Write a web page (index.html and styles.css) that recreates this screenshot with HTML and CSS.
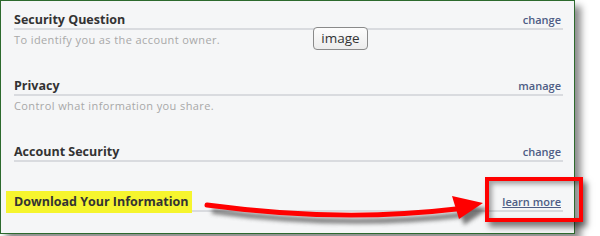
FILE: index.html
```html
<!DOCTYPE html>
<html lang="en">
<head>
    <meta charset="UTF-8">
    <title>Account Settings</title>
    <link rel="stylesheet" href="styles.css">
</head>
<body>
    <div class="page">
        <div class="frame">
            <div class="setting">
                <div class="setting-head">
                    <span class="title">Security Question</span>
                    <a class="action" href="#">change</a>
                </div>
                <div class="desc">To identify you as the account owner.</div>
            </div>
            <div class="setting">
                <div class="setting-head">
                    <span class="title">Privacy</span>
                    <a class="action" href="#">manage</a>
                </div>
                <div class="desc">Control what information you share.</div>
            </div>
            <div class="setting">
                <div class="setting-head">
                    <span class="title">Account Security</span>
                    <a class="action" href="#">change</a>
                </div>
            </div>
            <div class="setting last">
                <div class="setting-head">
                    <span class="title"><span class="highlight">Download Your Information</span></span>
                    <a class="action underline" href="#">learn more</a>
                </div>
            </div>
        </div>

        <span class="img-tag">image</span>

        <svg class="arrow" width="600" height="236" viewBox="0 0 600 236">
            <defs>
                <filter id="soft" x="-10%" y="-50%" width="120%" height="200%">
                    <feGaussianBlur stdDeviation="2.2"/>
                </filter>
            </defs>
            <g transform="translate(5,6)" fill="#555" stroke="#555" filter="url(#soft)" opacity="0.8">
                <path d="M207 205 Q340 223 456 209" fill="none" stroke-width="5"/>
                <polygon points="452,196 483,203 459,219" stroke="none"/>
            </g>
            <path d="M207 205 Q340 223 456 209" fill="none" stroke="#f00" stroke-width="5" stroke-linecap="round"/>
            <polygon points="452,196 483,203 459,219" fill="#f00"/>
        </svg>

        <div class="callout"></div>
    </div>
</body>
</html>
```

FILE: styles.css
```css
body {
    margin: 0;
    background: #fff;
    font-family: "Open Sans", "DejaVu Sans", sans-serif;
}
.page {
    position: relative;
    width: 600px;
    height: 236px;
    overflow: hidden;
}
.frame {
    width: 549px;
    height: 221px;
    padding: 11px 11px 0 13px;
    background: #f5f6f7;
    border: 1px solid #2d6a2d;
    box-shadow: 6px 6px 7px rgba(0, 0, 0, 0.45);
    overflow: hidden;
}
.setting {
    padding-bottom: 32px;
}
.setting.last {
    padding-bottom: 0;
}
.setting-head {
    display: flex;
    justify-content: space-between;
    align-items: flex-end;
    height: 16px;
    border-bottom: 2px solid #d9dbdf;
}
.title {
    font-size: 12.5px;
    font-weight: 700;
    color: #333;
    line-height: 16px;
}
.highlight {
    background: #f6f52e;
    padding: 2px 4px 3px 8px;
    margin-left: -8px;
}
.action {
    font-size: 11px;
    font-weight: 600;
    color: #4e5d85;
    text-decoration: none;
    line-height: 16px;
    margin-right: 2px;
}
.action.underline {
    text-decoration: underline;
}
.desc {
    font-size: 11px;
    letter-spacing: 0.4px;
    color: #a8a8a8;
    line-height: 14px;
    margin: 3px 0 -1px;
}
.img-tag {
    position: absolute;
    left: 313px;
    top: 27px;
    width: 53px;
    height: 21px;
    line-height: 20px;
    text-align: center;
    font-size: 13.5px;
    color: #333;
    border: 1px solid #8a8a8a;
    border-radius: 4px;
    background: linear-gradient(#fdfdfd, #ececec);
}
.arrow {
    position: absolute;
    left: 0;
    top: 0;
}
.callout {
    position: absolute;
    left: 485px;
    top: 177px;
    width: 90px;
    height: 37px;
    border: 4px solid #f00;
    box-shadow: 4px 5px 6px rgba(0, 0, 0, 0.5), inset 3px 3px 5px rgba(0, 0, 0, 0.35);
}
```
